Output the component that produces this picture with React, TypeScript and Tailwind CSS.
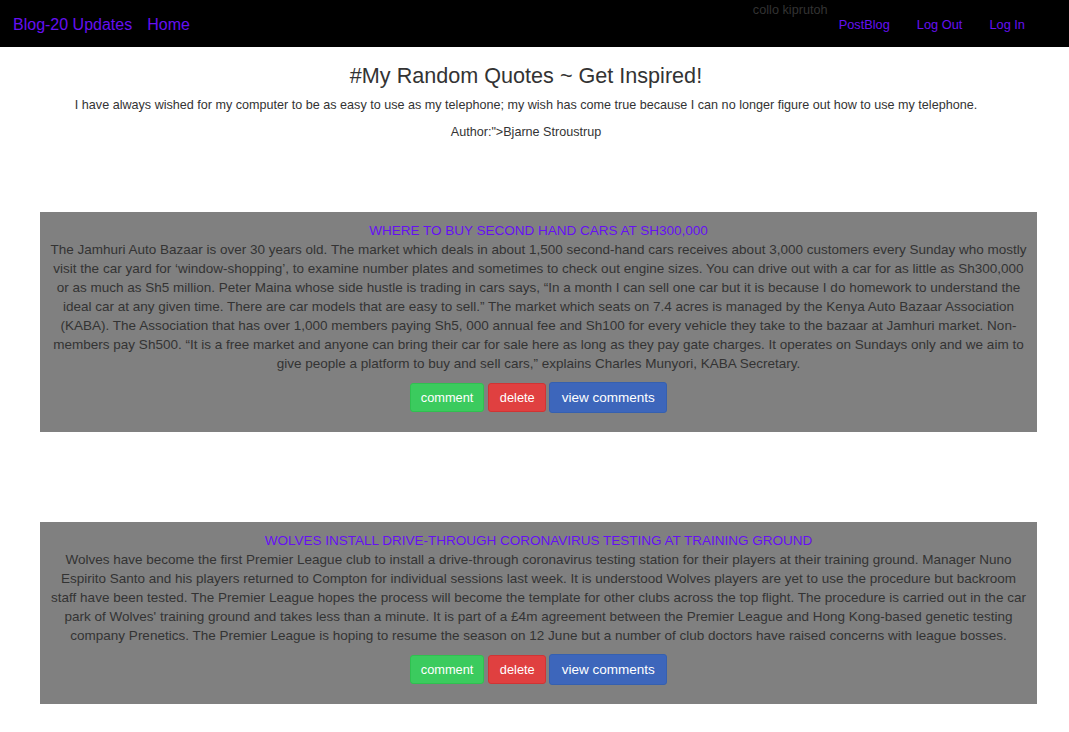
import React from "react";

type Post = {
  title: string;
  body: string;
};

const posts: Post[] = [
  {
    title: "WHERE TO BUY SECOND HAND CARS AT SH300,000",
    body: "The Jamhuri Auto Bazaar is over 30 years old. The market which deals in about 1,500 second-hand cars receives about 3,000 customers every Sunday who mostly visit the car yard for \u2018window-shopping\u2019, to examine number plates and sometimes to check out engine sizes. You can drive out with a car for as little as Sh300,000 or as much as Sh5 million. Peter Maina whose side hustle is trading in cars says, \u201cIn a month I can sell one car but it is because I do homework to understand the ideal car at any given time. There are car models that are easy to sell.\u201d The market which seats on 7.4 acres is managed by the Kenya Auto Bazaar Association (KABA). The Association that has over 1,000 members paying Sh5, 000 annual fee and Sh100 for every vehicle they take to the bazaar at Jamhuri market. Non-members pay Sh500. \u201cIt is a free market and anyone can bring their car for sale here as long as they pay gate charges. It operates on Sundays only and we aim to give people a platform to buy and sell cars,\u201d explains Charles Munyori, KABA Secretary.",
  },
  {
    title: "WOLVES INSTALL DRIVE-THROUGH CORONAVIRUS TESTING AT TRAINING GROUND",
    body: "Wolves have become the first Premier League club to install a drive-through coronavirus testing station for their players at their training ground. Manager Nuno Espirito Santo and his players returned to Compton for individual sessions last week. It is understood Wolves players are yet to use the procedure but backroom staff have been tested. The Premier League hopes the process will become the template for other clubs across the top flight. The procedure is carried out in the car park of Wolves' training ground and takes less than a minute. It is part of a \u00a34m agreement between the Premier League and Hong Kong-based genetic testing company Prenetics. The Premier League is hoping to resume the season on 12 June but a number of club doctors have raised concerns with league bosses.",
  },
];

function Navbar() {
  return (
    <nav className="h-[47px] bg-black flex items-start justify-between">
      <div className="flex items-center gap-[15px] pl-[13px] pt-[14px] text-[16px] leading-[22px] text-[#6610f2]">
        <a href="#">Blog-20 Updates</a>
        <a href="#">Home</a>
      </div>
      <div className="flex items-start pr-[44px]">
        <span className="text-[12.7px] leading-[16px] text-[#333] mr-[11px] pt-[2px]">collo kiprutoh</span>
        <div className="flex gap-[27px] pt-[17px] text-[12.8px] leading-[16px] text-[#6610f2]">
          <a href="#">PostBlog</a>
          <a href="#">Log Out</a>
          <a href="#">Log In</a>
        </div>
      </div>
    </nav>
  );
}

function PostCard({ post }: { post: Post }) {
  return (
    <div className="ml-[40px] w-[997px] bg-[#808080] px-[9px] pt-[11px] pb-[19px] text-center">
      <h3 className="text-[13.5px] leading-[16px] text-[#6610f2]">{post.title}</h3>
      <p className="text-[13.5px] leading-[19px] text-[#333] mt-[1px]">{post.body}</p>
      <div className="flex justify-center items-center gap-[3px] mt-[9px]">
        <button className="h-[29px] px-[10px] mr-[1px] rounded-[3px] border border-[#30c050] bg-[#3bcb5e] text-white text-[12.8px]">
          comment
        </button>
        <button className="h-[29px] px-[10.5px] rounded-[3px] border border-[#d03434] bg-[#e04040] text-white text-[12.8px]">
          delete
        </button>
        <button className="h-[31px] px-[11.5px] pt-[1px] rounded-[3px] border border-[#3560b0] bg-[#3d66bb] text-white text-[13.5px]">
          view comments
        </button>
      </div>
    </div>
  );
}

export default function App() {
  return (
    <div className="min-h-[732px] bg-white font-['Liberation_Sans',Arial,sans-serif] text-[#333]">
      <Navbar />
      <div className="text-center pt-[15px] pr-[17px]">
        <h1 className="text-[21.6px] leading-[28px]">#My Random Quotes ~ Get Inspired!</h1>
        <p className="text-[12.6px] leading-[18px] mt-[6px]">
          I have always wished for my computer to be as easy to use as my telephone; my wish has come true because I can no longer figure out how to use my telephone.
        </p>
        <p className="text-[12.6px] leading-[18px] mt-[9px]">Author:"&gt;Bjarne Stroustrup</p>
      </div>
      <div className="flex flex-col gap-[90px] mt-[71px]">
        {posts.map((p) => (
          <PostCard key={p.title} post={p} />
        ))}
      </div>
    </div>
  );
}
